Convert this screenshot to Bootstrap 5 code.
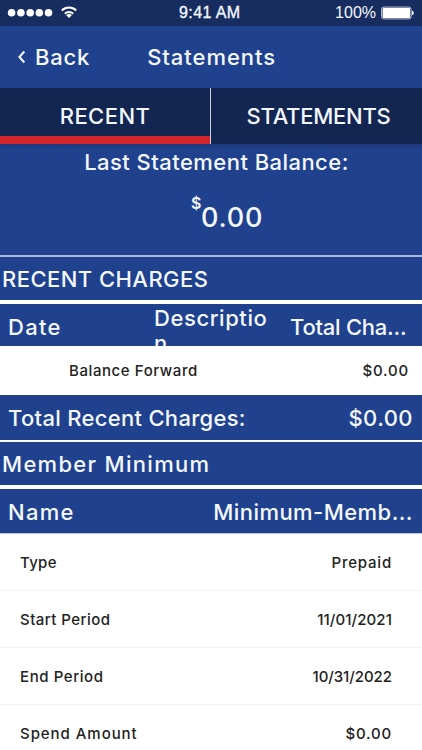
<!DOCTYPE html>
<html lang="en">
<head>
<meta charset="utf-8">
<meta name="viewport" content="width=device-width, initial-scale=1">
<title>Statements</title>
<link href="https://cdn.jsdelivr.net/npm/bootstrap@5.3.0/dist/css/bootstrap.min.css" rel="stylesheet">
<style>
:root { --royal: #20418d; --navy: #122651; --ink: #f3f8ff; }
body { font-family: Inter, "Open Sans", sans-serif; font-weight: 500; font-size: 22px; line-height: 26px; color: var(--ink); background: #fff; height: 750px; overflow: hidden; }
.statusbar { height: 26px; background: #172d60; font: 400 16px/26px "Liberation Sans", Arial, sans-serif; padding: 0 8px 0 7px; }
.statusbar svg { display: block; }
.statusbar .clock { font-size: 16px; letter-spacing: .4px; -webkit-text-stroke: .35px currentColor; left: 179px; }
.topbar { height: 62px; background: var(--royal); padding: 0 0 1px 17px; }
.topbar h1 { font-size: 22px; font-weight: 500; line-height: 26px; margin: 0 0 0 57px; }
.back-link { color: inherit; gap: 9px; }
.tabs { height: 56px; background: var(--navy); }
.tabs .nav-link { color: inherit; border-radius: 0; padding: 0; }
.tabs .tab-recent { width: 211px; border-right: 1px solid #cdd3e0; position: relative; }
.tabs .tab-recent::after { content: ""; position: absolute; left: 0; right: 0; bottom: 0; height: 8px; background: #d5252c; }
.balance { height: 113px; background: linear-gradient(#1c3a80, var(--royal) 7px); border-bottom: 2px solid #a9b9dc; padding-top: 5px; }
.balance-label { padding-left: 11px; }
.amount { font-size: 27px; line-height: 32px; margin-top: 27px; padding-left: 191px; }
.amount sup { font-size: 16px; font-weight: 600; line-height: 16px; top: 0; margin-top: -7px; width: 10px; }
.section-title { height: 43px; background: var(--royal); font-size: 22px; font-weight: 500; margin: 0; line-height: 26px; padding-left: 2px; }
.row-head { background: var(--royal); padding: 0 10px 0 8px; }
.charges-head { height: 42px; }
.total-row { height: 45px; padding-top: 1px; }
.name-row { height: 44px; padding-top: 2px; }
.desc-cell { width: 116px; height: 42px; line-height: 25px; padding-top: 2px; word-break: break-all; overflow: hidden; margin-left: 94px; }
.date-cell { width: 52px; padding-top: 4px; }
.total-cell { margin-left: 20px; padding-top: 4px; }
.detail { color: #222; font-size: 15px; line-height: 20px; height: 57px; padding: 1px 31px 0 20px; border-top: 1px solid #f1f2f4; }
.detail.first { border-top-color: #b5c3e2; }
.charge { color: #222; font-size: 15px; line-height: 20px; height: 49px; padding: 0 14px 0 69px; }
.s-tight { letter-spacing: -.25px; } .s-snug { letter-spacing: -.05px; } .s0 { letter-spacing: .1px; } .s3 { letter-spacing: .3px; }
.s5 { letter-spacing: .45px; } .s6 { letter-spacing: .58px; } .s8 { letter-spacing: .8px; } .s9 { letter-spacing: .95px; }
.s12 { letter-spacing: 1.3px; }
.trim { margin-right: -1px; }
</style>
</head>
<body>
<div class="statusbar d-flex align-items-center position-relative">
  <svg width="72" height="20" viewBox="0 0 72 20" aria-hidden="true">
    <g fill="#fff"><circle cx="4.6" cy="9.7" r="3.8"/><circle cx="13.9" cy="9.7" r="3.8"/><circle cx="23.2" cy="9.7" r="3.8"/><circle cx="32.3" cy="9.7" r="3.8"/><circle cx="41.5" cy="9.7" r="3.8"/></g>
    <g fill="none" stroke="#fff" stroke-width="2"><path d="M54.8 7.5a10.2 10.2 0 0 1 14.4 0"/><path d="M57.8 10.8a6 6 0 0 1 8.4 0"/></g>
    <path d="M62 15l-2.8-2.8a4 4 0 0 1 5.6 0z" fill="#fff"/>
  </svg>
  <span class="clock position-absolute">9:41 AM</span>
  <span class="ms-auto">100%</span>
  <svg class="ms-1" width="34" height="14" viewBox="0 0 34 14" aria-hidden="true"><rect x="1.6" y="1.1" width="29.5" height="11.8" rx="2.2" fill="none" stroke="#c3cbde" stroke-width="1"/><rect x="2.6" y="2.1" width="27.5" height="9.8" rx="1" fill="#fff"/><path d="M32 4.7q1.8.6 1.8 2.3T32 9.3z" fill="#fff"/></svg>
</div>
<header class="topbar d-flex align-items-center">
  <a href="#" class="back-link d-flex align-items-center text-decoration-none">
    <svg width="9" height="14" viewBox="0 0 9 14" aria-hidden="true"><path d="M7.3 1.5L2.4 7l4.9 5.5" fill="none" stroke="#f3f8ff" stroke-width="2"/></svg>
    <span class="s8">Back</span>
  </a>
  <h1 class="s9">Statements</h1>
</header>
<nav class="tabs nav flex-nowrap">
  <a href="#" class="nav-link tab-recent d-flex align-items-center justify-content-center s5">RECENT</a>
  <a href="#" class="nav-link flex-fill d-flex align-items-center justify-content-center ps-1 s-tight">STATEMENTS</a>
</nav>
<section class="balance">
  <div class="balance-label text-center s5">Last Statement Balance:</div>
  <div class="amount d-flex align-items-start"><sup>$</sup><span class="s8">0.00</span></div>
</section>
<h2 class="section-title d-flex align-items-center s5">RECENT CHARGES</h2>
<div class="border-top border-4 border-white"></div>
<div class="row-head charges-head d-flex align-items-center">
  <span class="date-cell s12">Date</span>
  <span class="desc-cell s6">Description</span>
  <span class="total-cell text-nowrap s-tight">Total Cha...</span>
</div>
<div class="charge d-flex align-items-center justify-content-between"><span class="s6">Balance Forward</span><span class="s8 trim">$0.00</span></div>
<div class="row-head total-row d-flex align-items-center justify-content-between"><span class="s3">Total Recent Charges:</span><span class="s5 trim">$0.00</span></div>
<div class="border-top border-2 border-light"></div>
<h2 class="section-title d-flex align-items-center s12">Member Minimum</h2>
<div class="border-top border-4 border-white"></div>
<div class="row-head name-row d-flex align-items-center justify-content-between"><span class="s12">Name</span><span class="s5 trim">Minimum-Memb...</span></div>
<div class="detail first d-flex align-items-center justify-content-between"><span class="s3">Type</span><span class="s8 trim">Prepaid</span></div>
<div class="detail d-flex align-items-center justify-content-between"><span class="s5">Start Period</span><span class="s0 trim">11/01/2021</span></div>
<div class="detail d-flex align-items-center justify-content-between"><span class="s6">End Period</span><span class="s-snug trim">10/31/2022</span></div>
<div class="detail d-flex align-items-center justify-content-between"><span class="s9">Spend Amount</span><span class="s8 trim">$0.00</span></div>
<script src="https://cdn.jsdelivr.net/npm/bootstrap@5.3.0/dist/js/bootstrap.bundle.min.js"></script>
</body>
</html>
